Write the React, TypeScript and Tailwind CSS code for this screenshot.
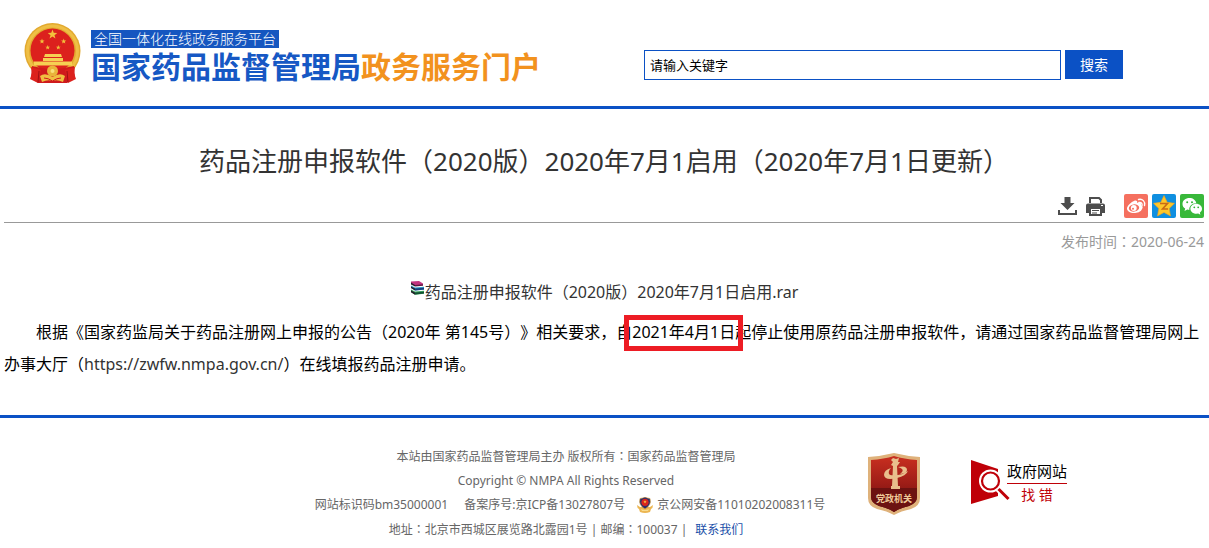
import React from 'react';

interface ShareButtonProps {
  label: string;
  className: string;
  children: React.ReactNode;
}

const Star = ({ x, y, r, fill }: { x: number; y: number; r: number; fill: string }) => {
  const points = Array.from({ length: 10 }, (_, i) => {
    const radius = i % 2 === 0 ? r : r * 0.42;
    const angle = (Math.PI / 5) * i - Math.PI / 2;
    return `${x + radius * Math.cos(angle)},${y + radius * Math.sin(angle)}`;
  }).join(' ');
  return <polygon points={points} fill={fill} />;
};

const NationalEmblem = () => (
  <svg className="h-[61px] w-[59px] shrink-0" viewBox="0 0 59 61">
    <circle cx="28.500" cy="28" r="28" fill="#e2a92f" />
    <circle cx="28.500" cy="28" r="25" fill="none" stroke="#efbf45" strokeWidth="3" />
    <circle cx="28.500" cy="27.500" r="22" fill="#dc211d" />
    <Star x={28.5} y={11.5} r={5} fill="#f3c23c" />
    <Star x={18} y={18.3} r={2.7} fill="#f3c23c" />
    <Star x={39.7} y={18.3} r={2.7} fill="#f3c23c" />
    <Star x={23.7} y={24.5} r={2.5} fill="#f3c23c" />
    <Star x={34.3} y={24.5} r={2.5} fill="#f3c23c" />
    <path d="M21 31h16l1 3H20zM19 35h20v3H19zM10 38.500h38v4H10z" fill="#f6d052" />
    <path d="M8 43q12 3 20.500 3T50 43l1 12-8 5H14l-7-5z" fill="#cf1a1c" />
    <path d="M7 44l10 3-3 13-8-4 2-6zM51 44l-10 3 3 13 8-4-2-6z" fill="#dc211d" />
    <path d="M15 48l-1 11M43 48l1 11" stroke="#9f1014" strokeWidth="1" />
    <circle cx="28.500" cy="48" r="5.500" fill="#e9b43a" />
    <circle cx="28.500" cy="48" r="2" fill="#f9df7a" />
    <path d="M16 53q5-4 12.500 1 7.500-5 12.500-1l-2 6q-6-3-10.500-1Q24 56 18 59z" fill="#f0be41" />
    <path d="M20 55q4 0 8.500 3 4.500-3 8.500-3" fill="none" stroke="#cf1a1c" strokeWidth="1" />
  </svg>
);

const DownloadIcon = () => (
  <svg className="h-[18px] w-[19px]" viewBox="0 0 19 18" fill="#4d4d4d">
    <path d="M6.500 0h6v6h4L9.500 13 2.500 6h4z" />
    <path d="M0 13h2v3h15v-3h2v5H0z" />
  </svg>
);

const PrinterIcon = () => (
  <svg className="h-[19px] w-[19px]" viewBox="0 0 19 19">
    <path d="M4 6V1h9l2 2v3" fill="#fff" stroke="#4d4d4d" strokeWidth="2" />
    <path d="M2 6.500h15q2 0 2 2V16h-4v-5H4v5H0V8.500q0-2 2-2z" fill="#4d4d4d" />
    <path d="M4 11h11v7H4z" fill="#fff" stroke="#4d4d4d" strokeWidth="2" />
    <path d="M6 13.500h7M6 16h5" stroke="#4d4d4d" strokeWidth="1" />
    <path d="M15 8h2v1h-2z" fill="#fff" />
  </svg>
);

const WeiboIcon = () => (
  <svg className="h-6 w-6" viewBox="0 0 24 24">
    <path d="M10 7c2-1 4 0 3 2 3-1 5 0 4 2 2 1 2 3 1 4-1 3-5 4-8 4-4 0-7-2-7-4.500C3 12 7 8 10 7z" fill="#fff" />
    <ellipse cx="10" cy="14" rx="5.200" ry="3.600" fill="#f5705f" transform="rotate(-8 10 14)" />
    <circle cx="9.800" cy="14" r="2.900" fill="#fff" />
    <circle cx="9" cy="14.700" r="1" fill="#f5705f" />
    <path d="M15 8.500c2-.5 3.500.8 3 3M14.500 5.500c4-1 7 2 6 6" fill="none" stroke="#fff" strokeWidth="1.400" strokeLinecap="round" />
  </svg>
);

const QzoneIcon = () => (
  <svg className="h-6 w-6" viewBox="0 0 24 24">
    <path d="M12 1.500l3.200 6.800 7.300 1-5.300 5.200 1.300 7.500-6.500-3.600L5.500 22l1.300-7.500L1.500 9.300l7.300-1z" fill="#fdc72a" stroke="#f5a21a" strokeWidth=".6" />
    <path d="M8 9.500h7.500L10.500 15H16" fill="none" stroke="#c96a14" strokeWidth="1.600" />
  </svg>
);

const WechatIcon = () => (
  <svg className="h-6 w-6" viewBox="0 0 24 24" fill="#fff">
    <path d="M9.500 4C5.500 4 2.500 6.500 2.500 10c0 2 1 3.500 2.700 4.600L4.500 17l2.800-1.400 2 .3C9 12 12 9 16.300 9.200 15.700 6 13 4 9.500 4z" />
    <path d="M22 14.800c0-2.800-2.700-5-5.800-5s-5.800 2.200-5.800 5 2.600 5 5.800 5l2-.3 2.200 1.300-.6-2.100c1.400-1 2.200-2.300 2.200-3.900z" />
    <g fill="#35b535">
      <circle cx="7.200" cy="8.300" r="1" />
      <circle cx="12" cy="8.300" r="1" />
      <circle cx="14.300" cy="13.300" r=".9" />
      <circle cx="18.200" cy="13.300" r=".9" />
    </g>
  </svg>
);

const RarIcon = () => (
  <svg className="inline-block h-4 w-[15px] align-[2px]" viewBox="0 0 15 16">
    <path d="M1 1.500L9 1l4 2.500v1.500L5 6 1 3.500z" fill="#c2347f" />
    <path d="M5 5l8-.8v1.600L5 6.500z" fill="#5f1740" />
    <path d="M1 5.500l4 2 9-.8v3L5 10.500l-4-2.500z" fill="#2f9bc9" />
    <path d="M5 8.500l9-.8v1.800l-9 1z" fill="#173f7c" />
    <path d="M1 9.500l4 2 9-.8v3l-9 1-4-2.500z" fill="#38a35d" />
    <path d="M5 12.500l9-.8v1.800l-9 1z" fill="#145233" />
    <path d="M1 2.500l4 2.500v1.500L1 4.500zM1 6.500l4 2v2l-4-2.500zM1 10.500l4 2v2.200l-4-2.500z" fill="#26202c" />
  </svg>
);

const PoliceBadge = () => (
  <svg className="block h-4 w-4" viewBox="0 0 16 16">
    <path d="M0 8q0 3 2 4l1 3q5 2 10 0l1-3q2-1 2-4l-3 2H3z" fill="#ecb652" />
    <path d="M8 0q2 1 5 1.500Q15 8 8 12 1 8 3 1.500 6 1 8 0z" fill="#28306e" stroke="#e0a63c" strokeWidth=".6" />
    <circle cx="8" cy="5.300" r="3.600" fill="#d9261c" />
    <Star x={8} y={4.8} r={1.7} fill="#f5c945" />
    <path d="M4 12q4 2 8 0l-1 2H5z" fill="#f8dc90" />
  </svg>
);

const PartyShield = () => (
  <svg className="h-[64px] w-[52px]" viewBox="0 0 52 64">
    <defs>
      <linearGradient id="shield" x1="0" y1="0" x2="0" y2="1">
        <stop offset="0" stopColor="#c92f20" />
        <stop offset="0.5" stopColor="#9d1d17" />
        <stop offset="1" stopColor="#5d0f0e" />
      </linearGradient>
    </defs>
    <path d="M0 5Q14 4 26 1q12 3 26 4v41q0 8-9 11-10 2-17 6-7-4-17-6-9-3-9-11z" fill="#dfb27b" />
    <path d="M3 8q13-1 23-4 10 3 23 4v37q0 6-8 9-9 2-15 6-6-4-15-6-8-3-8-9z" fill="url(#shield)" />
    <path d="M3 36h46v9q0 6-8 9-9 2-15 6-6-4-15-6-8-3-8-9z" fill="#6c1211" />
    <path d="M25 6l3 1 3-1-1 4h2l-2 3-1 1 1 20h2v3h-9v-3h1l1-20-2-1 2-3-2-2z" fill="#e9bf8c" />
    <path d="M23 16q-7 2-7 7 1 6 13 3 9-2 11-7-4 3-10 4-8 1-9-1-1-3 2-6zM30 15q9-2 9 3 0 3-7 4 4-3 2-5-1-1-4-2z" fill="#e9bf8c" />
    <text x="26" y="50" textAnchor="middle" fontSize="9" fontWeight="700" fontFamily="'Noto Sans CJK SC', sans-serif" fill="#f0cb9a">党政机关</text>
  </svg>
);

const FindErrorLogo = () => (
  <svg className="h-[44px] w-[40px] shrink-0" viewBox="0 0 40 44">
    <path d="M0 0l27 9v27L0 44z" fill="#bf0008" />
    <circle cx="19.500" cy="21" r="11.500" fill="#fff" />
    <path d="M26 28l11 11" stroke="#fff" strokeWidth="6" />
    <circle cx="19.500" cy="21" r="8.500" fill="#fff" stroke="#bf0008" strokeWidth="2.200" />
    <path d="M27.500 29l10 10" stroke="#bf0008" strokeWidth="3" />
  </svg>
);

const ShareButton: React.FC<ShareButtonProps> = ({ label, className, children }) => (
  <button type="button" aria-label={label} className={`h-6 w-6 overflow-hidden rounded-[2px] ${className}`}>
    {children}
  </button>
);

// full-width colon that sits in the middle of its cell
const Colon = () => <span className="font-['Noto_Sans_CJK_TC',sans-serif]">：</span>;

const Header = () => (
  <header className="flex h-[109px] border-b-3 border-[#0b51c5] pl-6">
    <div className="flex w-[620px] shrink-0 items-start gap-2 pt-[23px]">
      <NationalEmblem />
      <div className="pt-[7px]">
        <p className="w-fit bg-[#1556c0] px-[3px] text-[14px] leading-[18px] font-light text-white">全国一体化在线政务服务平台</p>
        <h1 className="text-[30px] leading-[38px] font-bold whitespace-nowrap text-[#1658c4]">
          国家药品监督管理局<span className="text-[#f2921e]">政务服务门户</span>
        </h1>
      </div>
    </div>
    <form className="flex items-start gap-1 pt-[50px]" onSubmit={e => e.preventDefault()}>
      <input
        type="text"
        aria-label="请输入关键字"
        defaultValue="请输入关键字"
        className="h-[30px] w-[417px] border border-[#0b51c5] px-[5px] pb-[2px] text-[13px] text-black outline-none"
      />
      <button type="submit" className="h-[29px] w-[58px] bg-[#0b51c5] text-[14px] text-white">搜索</button>
    </form>
  </header>
);

const Article = () => (
  <main className="border-b-3 border-[#0b51c5] pt-[32px] pr-[5px] pb-[35px] pl-1">
    <h2 className="text-center text-[26px] leading-[40px] text-[#333]">
      药品注册申报软件（2020版）2020年7月1启用（2020年7月1日更新）
    </h2>
    <div className="mt-[13px] flex items-center justify-end border-b border-[#999] pb-1">
      <button type="button" aria-label="下载"><DownloadIcon /></button>
      <button type="button" aria-label="打印" className="ml-[9px]"><PrinterIcon /></button>
      <div className="ml-[19px] flex gap-1">
        <ShareButton label="微博" className="bg-[#f5705f]"><WeiboIcon /></ShareButton>
        <ShareButton label="QQ空间" className="bg-[#0f8fe0]"><QzoneIcon /></ShareButton>
        <ShareButton label="微信" className="bg-[#38b83a]"><WechatIcon /></ShareButton>
      </div>
    </div>
    <p className="mt-[7px] text-right text-[14px] leading-[22px] text-[#999]">发布时间<Colon />2020-06-24</p>
    <p className="mt-[23px] text-center text-[16px] leading-[32px] text-[#333]">
      <RarIcon /><a href="#">药品注册申报软件（2020版）2020年7月1日启用.rar</a>
    </p>
    <p className="mt-2 indent-8 text-[16px] leading-[32px] text-black">
      根据《国家药监局关于药品注册网上申报的公告（2020年 第145号）》相关要求，自
      <span className="relative">
        2021年4月1日
        <span className="absolute -inset-x-2 -top-1.5 -bottom-2 border-5 border-[#ed1c24]" />
      </span>
      起停止使用原药品注册申报软件，请通过国家药品监督管理局网上办事大厅（<a href="#" className="text-[#333]">https://zwfw.nmpa.gov.cn/</a>）在线填报药品注册申请。
    </p>
  </main>
);

const Footer = () => (
  <footer className="flex items-start pt-[26px] text-[12px] leading-[24px] text-[#666]">
    <div className="ml-[276px] w-[580px] shrink-0 text-center">
      <p>本站由国家药品监督管理局主办 版权所有<Colon />国家药品监督管理局</p>
      <p>Copyright © NMPA All Rights Reserved</p>
      <p className="flex items-center justify-center pl-2">
        <span>网站标识码bm35000001</span>
        <span className="ml-4">备案序号:京ICP备13027807号</span>
        <span className="mr-1 ml-3"><PoliceBadge /></span>
        <span>京公网安备11010202008311号</span>
      </p>
      <p>
        地址<Colon />北京市西城区展览路北露园1号 | 邮编<Colon />100037 |
        <a href="#" className="ml-2 text-[#1a4fa8]">联系我们</a>
      </p>
    </div>
    <a href="#" aria-label="党政机关" className="mt-2 ml-3"><PartyShield /></a>
    <a href="#" className="mt-4 ml-[51px] flex">
      <FindErrorLogo />
      <span className="-ml-1 text-center">
        <span className="block border-b border-[#bf0008] text-[15px] leading-[23px] text-black">政府网站</span>
        <span className="block text-[14px] leading-[22px] text-[#bf0008]">找 错</span>
      </span>
    </a>
  </footer>
);

export default function App() {
  return (
    <div className="min-h-screen overflow-x-hidden bg-white font-['Noto_Sans','Noto_Sans_CJK_SC',sans-serif] [text-spacing-trim:space-all]">
      <Header />
      <Article />
      <Footer />
    </div>
  );
}
